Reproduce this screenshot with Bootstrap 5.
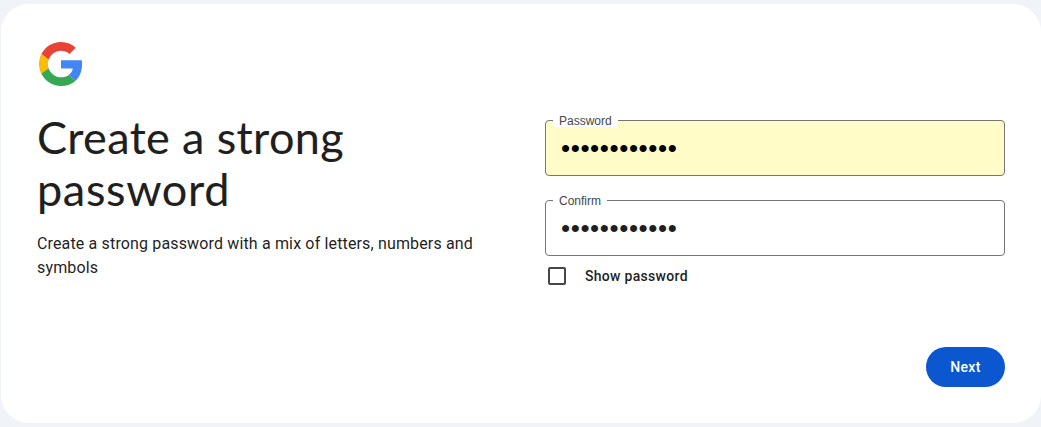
<!DOCTYPE html>
<html lang="en">
<head>
<meta charset="utf-8">
<meta name="viewport" content="width=device-width, initial-scale=1">
<title>Create a strong password</title>
<link href="https://cdn.jsdelivr.net/npm/bootstrap@5.3.0/dist/css/bootstrap.min.css" rel="stylesheet">
<style>
  body { background: #f0f4f9; color: #1f1f1f; font-family: Roboto, "Liberation Sans", sans-serif; padding: 4px 0 4px 1px; height: 427px; overflow: hidden; }
  .signup-panel { height: 419px; border-radius: 28px; padding: 36px; }
  .brand-logo { width: 44px; height: 44px; margin: 2px 0 0 2px; }
  .intro { width: 484px; }
  .title-text { font-family: Lato, sans-serif; font-size: 45px; line-height: 52px; margin: 25px 0 0; font-weight: 400; letter-spacing: .37px; -webkit-text-stroke: .1px #1f1f1f; }
  .title-text .second-line { letter-spacing: .65px; }
  .lead-in { font-size: 16px; line-height: 24px; margin: 17px 0 0; letter-spacing: .15px; }
  .fields { width: 460px; padding-top: 80px; }
  .outlined { height: 56px; margin-bottom: 24px; }
  .outlined .form-control { height: 56px; border: 1px solid #747775; border-radius: 4px; padding: 0 15px; font-family: "Liberation Sans", sans-serif; font-size: 26px; letter-spacing: .6px; color: #1f1f1f; background: #fff; }
  .outlined .form-control.filled { background: #fffcc8; color: #000; }
  .outlined label { left: 8px; top: -6px; padding: 0 6px; height: 13px; border-radius: 2px; background: #fff; color: #444746; font: 12px/14px "Liberation Sans", sans-serif; }
  .show-row { margin: -14px 0 0 3px; height: 20px; gap: 19px; font-size: 14px; font-weight: 500; line-height: 20px; letter-spacing: .3px; }
  .show-row .form-check-input { width: 18px; height: 18px; border: 2px solid #444746; border-radius: 2px; margin: 0; }
  .next-btn { width: 79px; height: 40px; padding: 0; background: #0b57d0; color: #fff; font-size: 14px; font-weight: 500; letter-spacing: .4px; margin-top: 61px; }
  .next-btn:hover { background: #0b57d0; color: #fff; }
</style>
</head>
<body>
<main class="signup-panel bg-white d-flex justify-content-between">
  <section class="intro">
    <svg class="brand-logo d-block" viewBox="0 0 48 48" aria-label="Google">
      <path fill="#ea4335" d="M24 9.5c3.54 0 6.71 1.22 9.21 3.6l6.85-6.85C35.9 2.38 30.47 0 24 0 14.62 0 6.51 5.38 2.56 13.22l7.98 6.19C12.43 13.72 17.74 9.5 24 9.5z"/>
      <path fill="#4285f4" d="M46.98 24.55c0-1.57-.15-3.09-.38-4.55H24v9.02h12.94c-.58 2.96-2.26 5.48-4.78 7.18l7.73 6c4.51-4.18 7.09-10.36 7.09-17.65z"/>
      <path fill="#fbbc05" d="M10.53 28.59c-.48-1.45-.76-2.99-.76-4.59s.27-3.14.76-4.59l-7.98-6.19C.92 16.46 0 20.12 0 24c0 3.88.92 7.54 2.56 10.78l7.97-6.19z"/>
      <path fill="#34a853" d="M24 48c6.48 0 11.93-2.13 15.89-5.81l-7.73-6c-2.15 1.45-4.92 2.3-8.16 2.3-6.26 0-11.57-4.22-13.47-9.91l-7.98 6.19C6.51 42.62 14.62 48 24 48z"/>
    </svg>
    <h1 class="title-text">Create a strong<br><span class="second-line">password</span></h1>
    <p class="lead-in">Create a strong password with a mix of letters, numbers and<br>symbols</p>
  </section>
  <form class="fields d-flex flex-column">
    <div class="outlined position-relative">
      <input type="password" class="form-control filled shadow-none" id="pw" value="abcdefghijkl">
      <label for="pw" class="position-absolute">Password</label>
    </div>
    <div class="outlined position-relative">
      <input type="password" class="form-control shadow-none" id="confirm" value="abcdefghijkl">
      <label for="confirm" class="position-absolute">Confirm</label>
    </div>
    <div class="show-row d-flex align-items-center">
      <input class="form-check-input" type="checkbox" id="show">
      <label for="show">Show password</label>
    </div>
    <button type="button" class="btn rounded-pill border-0 next-btn align-self-end">Next</button>
  </form>
</main>
<script src="https://cdn.jsdelivr.net/npm/bootstrap@5.3.0/dist/js/bootstrap.bundle.min.js"></script>
</body>
</html>
